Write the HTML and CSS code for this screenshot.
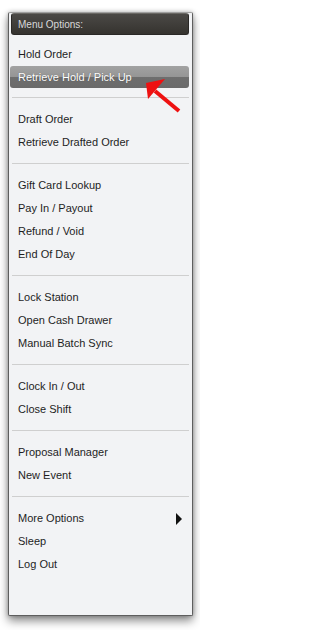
FILE: index.html
```html
<!DOCTYPE html>
<html>
<head>
<meta charset="utf-8">
<link rel="stylesheet" href="styles.css">
</head>
<body>
<div class="panel">
  <div class="header">Menu Options:</div>
  <div class="group">
    <div class="item">Hold Order</div>
    <div class="item active">Retrieve Hold / Pick Up</div>
  </div>
  <div class="sep"></div>
  <div class="group">
    <div class="item">Draft Order</div>
    <div class="item">Retrieve Drafted Order</div>
  </div>
  <div class="sep"></div>
  <div class="group">
    <div class="item">Gift Card Lookup</div>
    <div class="item">Pay In / Payout</div>
    <div class="item">Refund / Void</div>
    <div class="item">End Of Day</div>
  </div>
  <div class="sep"></div>
  <div class="group">
    <div class="item">Lock Station</div>
    <div class="item">Open Cash Drawer</div>
    <div class="item">Manual Batch Sync</div>
  </div>
  <div class="sep"></div>
  <div class="group">
    <div class="item">Clock In / Out</div>
    <div class="item">Close Shift</div>
  </div>
  <div class="sep"></div>
  <div class="group">
    <div class="item">Proposal Manager</div>
    <div class="item">New Event</div>
  </div>
  <div class="sep"></div>
  <div class="group">
    <div class="item submenu">More Options<span class="caret"></span></div>
    <div class="item">Sleep</div>
    <div class="item">Log Out</div>
  </div>
</div>
<svg class="arrow" width="60" height="50" viewBox="140 75 60 50">
  <line x1="155" y1="91" x2="179" y2="111" stroke="#ee1111" stroke-width="4"/>
  <polygon points="146,83 165,79 148,99" fill="#ee1111"/>
</svg>
</body>
</html>
```

FILE: styles.css
```css
html, body {
  margin: 0;
  padding: 0;
  background: #ffffff;
}
body {
  font-family: "Liberation Sans", Arial, sans-serif;
  position: relative;
  width: 200px;
  height: 630px;
  overflow: hidden;
}
.panel {
  margin: 12px 0 0 8px;
  width: 185px;
  height: 604px;
  box-sizing: border-box;
  background: #f2f3f5;
  border: 1px solid #5e5e5e;
  border-top-color: #a0a0a0;
  border-radius: 2px;
  box-shadow: 0 5px 10px rgba(0, 0, 0, 0.45), 0 0 4px rgba(0, 0, 0, 0.25);
  padding: 0 3px;
}
.header {
  margin: 0 0 8px -1px;
  height: 22px;
  line-height: 21px;
  box-sizing: border-box;
  padding-left: 6px;
  background: linear-gradient(#4b4946, #35332f);
  border: 1px solid #2a2826;
  border-top-color: #6a6864;
  border-radius: 3px;
  color: #d9d9d9;
  font-size: 10px;
}
.item {
  height: 23px;
  line-height: 23px;
  padding-left: 6px;
  font-size: 11px;
  color: #1e1e1e;
  position: relative;
}
.item.active {
  margin: 0 0 0 -2px;
  padding-left: 8px;
  height: 22px;
  line-height: 22px;
  margin-bottom: 1px;
  border-radius: 3px;
  background: linear-gradient(#a2a2a2, #959595 50%, #6e6e6e 50%, #6a6a6a);
  color: #ffffff;
  text-shadow: 0 0 1px rgba(0, 0, 0, 0.4);
}
.sep {
  height: 1px;
  background: #cfcfcf;
  margin: 9px 0 10px 0;
}
.submenu {
  display: flex;
  align-items: center;
  justify-content: space-between;
  padding-right: 7px;
}
.caret {
  width: 0;
  height: 0;
  border-left: 6px solid #111;
  border-top: 6px solid transparent;
  border-bottom: 6px solid transparent;
}
.arrow {
  position: absolute;
  left: 140px;
  top: 75px;
}
```
